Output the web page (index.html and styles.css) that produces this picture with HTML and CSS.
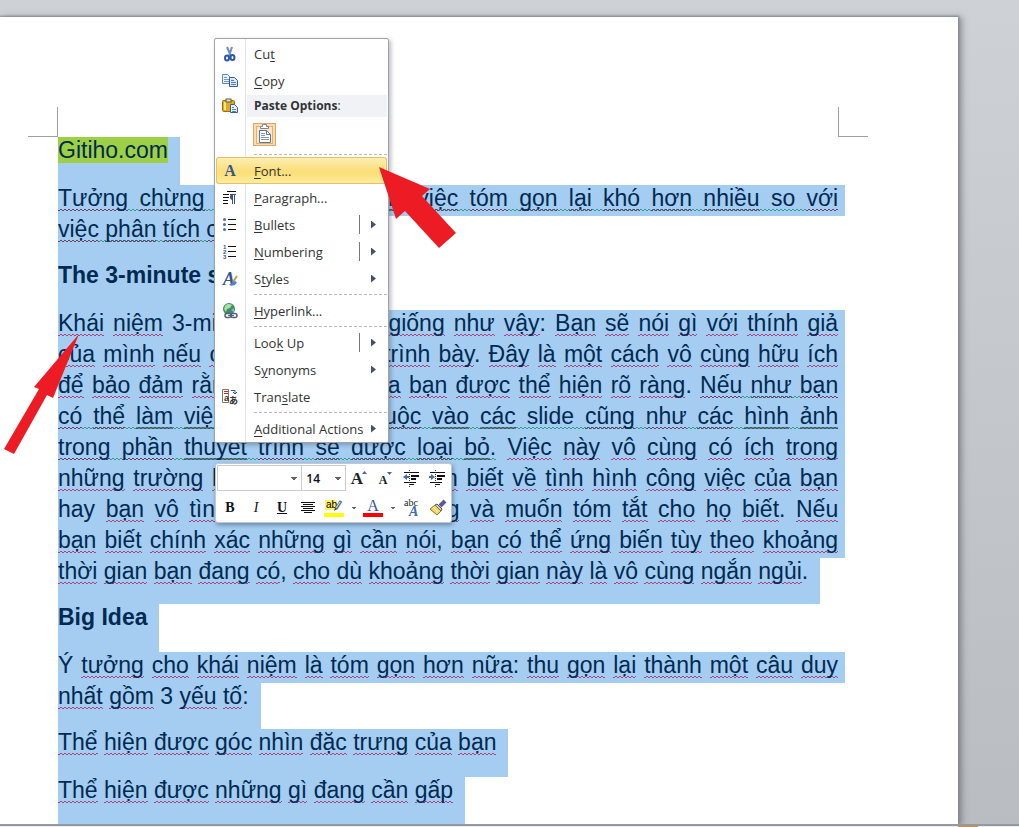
FILE: index.html
```
<!DOCTYPE html>
<html lang="vi">
<head>
    <meta charset="UTF-8">
    <meta name="viewport" content="width=device-width, initial-scale=1.0">
    <title>Gitiho.com</title>
    <link rel="stylesheet" href="styles.css">
</head>
<body>
    <main class="workspace">
        <article class="page">
            <div class="margin-marks">
                <span class="mark mark-left"></span>
                <span class="mark mark-right"></span>
            </div>

            <div class="document">
                <p><span class="line end"><mark>Gitiho.com</mark></span></p>

                <p class="justified">
                    <span class="line"><span class="grammar"><u>Tưởng</u> <u>chừng</u> <u>thuận</u> <u>tiện</u>, <u>nhưng</u> <u>việc</u> <u>tóm</u> <u>gọn</u> <u>lại</u> <u>khó</u> <u>hơn</u> <u>nhiều</u> so <u>với</u></span></span>
                    <span class="line end"><span class="grammar"><u>việc</u> <u>phân</u> <u>tích</u> <u>chi</u> <u>tiết</u></span>.</span>
                </p>

                <h2><span class="line end">The 3-minute story</span></h2>

                <p class="justified">
                    <span class="line"><u>Khái</u> <u>niệm</u> 3-minute story <u>cũng</u> <u>giống</u> <u>như</u> <u>vậy</u>: <u>Bạn</u> <u>sẽ</u> <u>nói</u> <u>gì</u> <u>với</u> <u>thính</u> <u>giả</u></span>
                    <span class="line"><u>của</u> <u>mình</u> <u>nếu</u> <u>chỉ</u> <u>được</u> 3 <u>phút</u> <u>trình</u> <u>bày</u>. <u>Đây</u> <u>là</u> <u>một</u> <u>cách</u> <u>vô</u> <u>cùng</u> <u>hữu</u> <u>ích</u></span>
                    <span class="line"><u>để</u> <u>bảo</u> <u>đảm</u> <u>rằng</u> <u>thông</u> <u>điệp</u> <u>của</u> <u>bạn</u> <u>được</u> <u>thể</u> <u>hiện</u> <u>rõ</u> <u>ràng</u>. <span class="grammar"><u>Nếu</u> <u>như</u> <u>bạn</u></span></span>
                    <span class="line"><span class="grammar"><u>có</u> <u>thể</u> <u>làm</u> <u>việc</u>, <u>không</u> <u>phụ</u> <u>thuộc</u> <u>vào</u> <u>các</u> slide <u>cũng</u> <u>như</u> <u>các</u> <u>hình</u> <u>ảnh</u></span></span>
                    <span class="line"><span class="grammar"><u>trong</u> <u>phần</u> <u>thuyết</u> <u>trình</u> <u>sẽ</u> <u>được</u> <u>loại</u> <u>bỏ</u>.</span> <u>Việc</u> <u>này</u> <u>vô</u> <u>cùng</u> <u>có</u> <u>ích</u> <u>trong</u></span>
                    <span class="line"><u>những</u> <u>trường</u> <u>hợp</u> <u>sếp</u> <u>của</u> <u>bạn</u> <u>muốn</u> <u>biết</u> <u>về</u> <u>tình</u> <u>hình</u> <u>công</u> <u>việc</u> <u>của</u> <u>bạn</u></span>
                    <span class="line">hay <u>bạn</u> <u>vô</u> <u>tình</u> <u>gặp</u> <u>một</u> <u>khách</u> <u>hàng</u> <u>và</u> <u>muốn</u> <u>tóm</u> <u>tắt</u> <u>cho</u> <u>họ</u> <u>biết</u>. <u>Nếu</u></span>
                    <span class="line"><u>bạn</u> <u>biết</u> <u>chính</u> <u>xác</u> <u>những</u> <u>gì</u> <u>cần</u> <u>nói</u>, <u>bạn</u> <u>có</u> <u>thể</u> <u>ứng</u> <u>biến</u> <u>tùy</u> <u>theo</u> <u>khoảng</u></span>
                    <span class="line end"><u>thời</u> <u>gian</u> <u>bạn</u> <u>đang</u> <u>có</u>, <u>cho</u> <u>dù</u> <u>khoảng</u> <u>thời</u> <u>gian</u> <u>này</u> <u>là</u> <u>vô</u> <u>cùng</u> <u>ngắn</u> <u>ngủi</u>.</span>
                </p>

                <h2><span class="line end">Big Idea</span></h2>

                <p class="justified">
                    <span class="line">Ý <u>tưởng</u> <u>cho</u> <u>khái</u> <u>niệm</u> <u>là</u> <u>tóm</u> <u>gọn</u> <u>hơn</u> <u>nữa</u>: <u>thu</u> <u>gọn</u> <u>lại</u> <u>thành</u> <u>một</u> <u>câu</u> <u>duy</u></span>
                    <span class="line end"><u>nhất</u> <u>gồm</u> 3 <u>yếu</u> <u>tố</u>:</span>
                </p>

                <p><span class="line end"><u>Thể</u> <u>hiện</u> <u>được</u> <u>góc</u> <u>nhìn</u> <u>đặc</u> <u>trưng</u> <u>của</u> <u>bạn</u></span></p>
                <p><span class="line end"><u>Thể</u> <u>hiện</u> <u>được</u> <u>những</u> <u>gì</u> <u>đang</u> <u>cần</u> <u>gấp</u></span></p>
            </div>
        </article>
    </main>
    <footer class="status-edge"><span class="status-tab"></span></footer>

    <div class="context-menu" role="menu">
        <button class="item" role="menuitem">
            <svg class="icon" viewBox="0 0 16 16"><path d="M5 1l4 9M10 1L7 10" fill="none" stroke="#6d8fbd" stroke-width="2"/><ellipse cx="5" cy="12" rx="2" ry="2.500" fill="none" stroke="#2b57a8" stroke-width="2"/><ellipse cx="10.500" cy="11.500" rx="2" ry="2.500" fill="none" stroke="#2b57a8" stroke-width="2"/></svg>
            <span class="label">Cu<span class="key">t</span></span>
        </button>
        <button class="item" role="menuitem">
            <svg class="icon" viewBox="0 0 16 16"><path d="M.500 1.500h5l3 3v6h-8z" fill="#eaf2fc" stroke="#5d86bd"/><path d="M2 4.500h3M2 6.500h5M2 8.500h5" stroke="#6f98cc"/><path d="M7.500 4.500h5l3 3v6h-8z" fill="#dbe9fa" stroke="#2f5f9e"/><path d="M9 7.500h3M9 9.500h5M9 11.500h5" stroke="#5380b8"/></svg>
            <span class="label"><span class="key">C</span>opy</span>
        </button>
        <div class="heading">
            <svg class="icon" viewBox="0 0 16 16"><rect x=".500" y="2.500" width="12" height="11" rx="1" fill="#e0a91e" stroke="#9c6e13"/><path d="M3 4v8" stroke="#fbe38c" stroke-width="2"/><rect x="4" y="1" width="5" height="3" fill="#e9e4d2" stroke="#66583a"/><path d="M8.500 6.500h4l3 3v5h-7z" fill="#e7f0fb" stroke="#3a5f94"/><path d="M10 9.500h2M10 11.500h4M10 13.500h4" stroke="#5380b8"/></svg>
            <span class="heading-text">Paste Options<span class="colon">:</span></span>
        </div>
        <div class="paste-row">
            <button class="paste-button" aria-label="Keep Text Only">
                <svg width="21" height="21" viewBox="0 0 21 21"><rect x="2.500" y="2.500" width="16" height="17" fill="#fbe8c8" stroke="#d9b47c"/><path d="M6.500 4.500v-2h2v-2h4v2h2v2z" fill="#fff" stroke="#7d8596"/><path d="M5.500 6.500h7l4 4v8h-11z" fill="#fff" stroke="#66758f"/><path d="M12.500 6.500v4h4" fill="none" stroke="#66758f"/><path d="M7 9.500h4M7 11.500h4M7 13.500h8M7 15.500h8" stroke="#7d97bd"/></svg>
            </button>
        </div>
        <hr>
        <button class="item active" role="menuitem">
            <svg class="icon" viewBox="0 0 16 16"><text x="8" y="13" text-anchor="middle" class="glyph bold">A</text></svg>
            <span class="label"><span class="key">F</span>ont...</span>
        </button>
        <button class="item" role="menuitem">
            <svg class="icon" viewBox="0 0 16 16"><path d="M5 1.500h9M1 4.500h6M1 7.500h6M1 10.500h5M1 13.500h5" stroke="#111"/><path d="M10.500 4v10M12.500 4v10M8 4.500h6" stroke="#394f87" fill="none"/><path d="M11 4a3 3 0 0 0 0 6z" fill="#394f87"/></svg>
            <span class="label"><span class="key">P</span>aragraph...</span>
        </button>
        <button class="item" role="menuitem">
            <svg class="icon" viewBox="0 0 16 16"><path d="M6 2.500h8M6 7.500h8M6 12.500h8" stroke="#111"/><circle cx="2.500" cy="2.500" r="1.500" fill="#4a6ea9"/><circle cx="2.500" cy="7.500" r="1.500" fill="#4a6ea9"/><circle cx="2.500" cy="12.500" r="1.500" fill="#4a6ea9"/></svg>
            <span class="label"><span class="key">B</span>ullets</span>
            <span class="split"></span><span class="arrow"></span>
        </button>
        <button class="item" role="menuitem">
            <svg class="icon" viewBox="0 0 16 16"><path d="M6 2.500h8M6 7.500h8M6 12.500h8" stroke="#111"/><text x="1" y="5" class="digit">1</text><text x="1" y="10" class="digit">2</text><text x="1" y="15" class="digit">3</text></svg>
            <span class="label"><span class="key">N</span>umbering</span>
            <span class="split"></span><span class="arrow"></span>
        </button>
        <button class="item" role="menuitem">
            <svg class="icon" viewBox="0 0 16 16"><text x="7" y="14" text-anchor="middle" class="glyph slanted">A</text><path d="M15 5l-4 6" stroke="#b9a04a" stroke-width="2"/><path d="M8 14.500c2-4 4-5 6-4s-1 5-6 4z" fill="#4d83cf"/></svg>
            <span class="label">S<span class="key">t</span>yles</span>
            <span class="arrow"></span>
        </button>
        <hr>
        <button class="item" role="menuitem">
            <svg class="icon" viewBox="0 0 16 16"><circle cx="7" cy="6" r="6" fill="#3f8d62"/><path d="M3 3c2-3 5-2 7-1l-2 3-3 1-1 3-2-3z" fill="#a9dfa4"/><path d="M9 7l3-2v4z" fill="#79bce8"/><rect x="3" y="10.500" width="6" height="4" rx="2" fill="#fff" stroke="#51607a" stroke-width="1.500"/><rect x="9" y="10.500" width="6" height="4" rx="2" fill="#fff" stroke="#51607a" stroke-width="1.500"/><path d="M6 12.500h6" stroke="#51607a"/></svg>
            <span class="label"><span class="key">H</span>yperlink...</span>
        </button>
        <hr>
        <button class="item" role="menuitem">
            <span class="icon"></span>
            <span class="label">Loo<span class="key">k</span> Up</span>
            <span class="split"></span><span class="arrow"></span>
        </button>
        <button class="item" role="menuitem">
            <span class="icon"></span>
            <span class="label">S<span class="key">y</span>nonyms</span>
            <span class="arrow"></span>
        </button>
        <button class="item" role="menuitem">
            <svg class="icon" viewBox="0 0 16 16"><path d="M.500.500h6v13h-6z" fill="#fff" stroke="#777"/><path d="M2 2.500h4M2 4.500h4" stroke="#c22"/><text x="2" y="12" class="letter">a</text><text x="7" y="15" class="letter">あ</text><path d="M9 1.500h4v3M11 3l2 2 2-2" fill="none" stroke="#345a9c"/></svg>
            <span class="label">Tran<span class="key">s</span>late</span>
        </button>
        <hr>
        <button class="item" role="menuitem">
            <span class="icon"></span>
            <span class="label"><span class="key">A</span>dditional Actions</span>
            <span class="arrow"></span>
        </button>
    </div>

    <div class="mini-toolbar" role="toolbar">
        <div class="tool-row">
            <select class="font-name" aria-label="Font"><option></option></select>
            <select class="font-size" aria-label="Font size"><option>14</option></select>
            <button class="tool" aria-label="Grow font"><svg viewBox="0 0 20 20"><text x="8" y="16" text-anchor="middle" class="tool-letter large">A</text><path d="M13 6h5l-2.500-3z" fill="#44679e"/></svg></button>
            <button class="tool" aria-label="Shrink font"><svg viewBox="0 0 20 20"><text x="8" y="16" text-anchor="middle" class="tool-letter small">A</text><path d="M12 4h5l-2.500 3z" fill="#44679e"/></svg></button>
            <button class="tool" aria-label="Decrease indent"><svg viewBox="0 0 20 20"><path d="M3 4.500h15M3 14.500h12M9 16.500h4" stroke="#111"/><path d="M10 8h8M10 11h5" stroke="#111" stroke-width="2"/><path d="M8.500 2v17" stroke="#333" stroke-dasharray="1 1"/><path d="M2 9l4-3v2h2v2H6v2z" fill="#456cac"/></svg></button>
            <button class="tool" aria-label="Increase indent"><svg viewBox="0 0 20 20"><path d="M3 4.500h15M3 14.500h12M9 16.500h4" stroke="#111"/><path d="M10 8h8M10 11h5" stroke="#111" stroke-width="2"/><path d="M8.500 2v17" stroke="#333" stroke-dasharray="1 1"/><path d="M8 9L4 6v2H2v2h2v2z" fill="#456cac"/></svg></button>
        </div>
        <div class="tool-row">
            <button class="tool text-tool bold">B</button>
            <button class="tool text-tool italic">I</button>
            <button class="tool text-tool underlined">U</button>
            <button class="tool" aria-label="Center"><svg viewBox="0 0 20 20"><path d="M3 4.500h14M5 6.500h10M3 8.500h14M5 10.500h10M3 12.500h14M6 14.500h8" stroke="#111"/></svg></button>
            <button class="tool" aria-label="Highlight color"><svg viewBox="0 0 20 20"><rect x="1" y="2" width="12" height="10" fill="#fff36a"/><text x="2" y="10" class="ab">ab</text><path d="M17 3l-5 8" stroke="#55789f" stroke-width="3"/><path d="M16 4l-4 6" stroke="#d5e4f5"/><path d="M10 13l1-3 2 1z" fill="#333"/><rect y="15" width="20" height="4" fill="#ff0"/></svg></button>
            <button class="drop" aria-label="Highlight options"></button>
            <button class="tool" aria-label="Font color"><svg viewBox="0 0 20 20"><text x="10" y="13" text-anchor="middle" class="glyph">A</text><rect y="15" width="20" height="4" fill="#f00"/></svg></button>
            <button class="drop" aria-label="Font color options"></button>
            <button class="tool" aria-label="Styles"><svg viewBox="0 0 20 20"><text x="2" y="8" class="abc">abc</text><text x="7" y="18" class="style-letter">A</text></svg></button>
            <button class="tool" aria-label="Format painter"><svg viewBox="0 0 20 20"><path d="M17 3l-5 5" stroke="#5b5b8f" stroke-width="4"/><path d="M9 6l5 5-1 2-6-6z" fill="#c9ccd6" stroke="#555" stroke-width="1"/><path d="M7 7l6 6-4 4-7-6z" fill="#f3d867" stroke="#8f7420"/><path d="M5 9l5 5" stroke="#fff6bd"/></svg></button>
        </div>
    </div>

    <svg class="pointer pointer-menu" viewBox="0 0 77 82"><path d="M0 0l51 22-8 7 34 37-17 15-34-37-9 8z"/></svg>
    <svg class="pointer pointer-text" viewBox="0 0 76 120"><path d="M75 0L49 64l-6-3-33 59-10-5 35-60-5-2z"/></svg>
</body>
</html>
```

FILE: styles.css
```
* {
    box-sizing: border-box;
}

body {
    margin: 0;
    height: 100vh;
    display: flex;
    flex-direction: column;
    overflow: hidden;
    background: linear-gradient(#ced2d7, #b9bcc1);
    font-family: "Open Sans", sans-serif;
}

button {
    font-family: inherit;
    border: none;
    padding: 0;
    background: none;
    color: inherit;
}

.workspace {
    flex: 1;
    min-height: 0;
    overflow: hidden;
    padding: 17px 61px 0 0;
}

.page {
    min-height: 100%;
    padding-top: 90px;
    background-color: #fff;
    box-shadow: 0 0 2px 1px #85888e, 4px 0 6px rgba(80, 84, 92, 0.5);
}

.margin-marks {
    display: flex;
    justify-content: space-between;
    padding: 0 90px 0 28px;
}

.mark {
    width: 30px;
    height: 30px;
    border-bottom: 1px solid #a0a0a0;
}

.mark-left {
    border-right: 1px solid #a0a0a0;
}

.mark-right {
    border-left: 1px solid #a0a0a0;
}

/* selected text */
.document {
    padding: 0 113px 0 58px;
    font-family: "Liberation Sans", Arial, sans-serif;
    font-size: 23px;
    line-height: 27px;
    color: #002a52;
}

.document p,
.document h2 {
    margin: 0;
    font-size: inherit;
}

.line {
    display: block;
    padding: 0 7px 4px 0;
    white-space: nowrap;
    text-align-last: justify;
    background-color: #a4cdf1;
}

.line.end {
    width: fit-content;
    padding-right: 12px;
    padding-bottom: 21px;
    text-align-last: left;
}

.justified .line.end {
    padding-bottom: 19px;
}

mark {
    background-color: #9ed045;
    color: inherit;
}

/* zigzag under misspelled words (red) and sentences (green) */
.line u,
.grammar {
    --wave: #a8457f;
    text-decoration: none;
    background-image: linear-gradient(90deg, var(--wave) 2px, transparent 2px), linear-gradient(90deg, var(--wave) 2px, transparent 2px);
    background-size: 4px 1px;
    background-position: 0 100%, 2px calc(100% - 1px);
    background-repeat: repeat-x;
}

.grammar {
    --wave: #2f9e8a;
}

.grammar u {
    --wave: #6b3f66;
}

.status-edge {
    height: 3px;
    padding-left: 958px;
    border-top: 2px solid #96989d;
    background-color: #e9edf3;
}

.status-tab {
    display: block;
    width: 20px;
    height: 1px;
    background-color: #c98f3a;
}

/* right click menu */
.context-menu {
    position: absolute;
    left: 214px;
    top: 38px;
    width: 175px;
    padding: 1px 1px 0 1px;
    border: 1px solid #a0a3a8;
    border-radius: 2px;
    background: linear-gradient(90deg, #fff 30px, #e2e4e7 30px, #e2e4e7 31px, #fff 31px);
    box-shadow: 2px 2px 4px rgba(60, 60, 90, 0.35);
    color: #333;
    font-size: 13px;
}

.item {
    display: flex;
    align-items: center;
    width: 100%;
    height: 27px;
    padding: 0 11px 0 6px;
    font-size: 13px;
    text-align: left;
}

.item.active {
    border-radius: 3px;
    background: linear-gradient(#fdf0b8, #fbdf7c 50%, #fbe079 60%, #fdeea2);
    box-shadow: inset 0 0 0 1px #e5c365;
}

.icon {
    width: 16px;
    height: 16px;
    flex: none;
}

.label {
    flex: 1;
    padding-left: 16px;
    white-space: nowrap;
}

.key {
    text-decoration: underline;
    text-underline-offset: 2px;
}

.heading {
    display: flex;
    align-items: center;
    height: 24px;
    padding-left: 6px;
}

.heading-text {
    flex: 1;
    margin-left: 9px;
    padding-left: 7px;
    line-height: 22px;
    background-color: #f0f2f5;
    font-size: 12px;
    font-weight: bold;
}

.colon {
    font-weight: normal;
}

.paste-row {
    height: 34px;
    padding: 5px 0 0 37px;
}

.paste-button {
    display: block;
    width: 23px;
    height: 23px;
    border: 1px solid #dfa86a;
    background-color: #fbdcae;
}

.context-menu hr {
    height: 1px;
    margin: 2px 0 2px 38px;
    border: none;
    background: repeating-linear-gradient(90deg, #b8babf 0, #b8babf 3px, #fff 3px, #fff 5px);
}

.split {
    width: 1px;
    height: 19px;
    margin-right: 11px;
    background-color: #777;
}

.arrow {
    width: 5px;
    height: 8px;
    background-color: #44506f;
    clip-path: polygon(0 0, 100% 50%, 0 100%);
}

.glyph {
    font: 16px "Liberation Serif", serif;
    fill: #35558f;
}

.glyph.bold {
    font-weight: bold;
}

.glyph.slanted {
    font-style: italic;
    font-weight: bold;
    font-size: 18px;
}

.digit {
    font: bold 6px "Liberation Sans", sans-serif;
    fill: #35558f;
}

.letter {
    font: bold 9px "Liberation Sans", "Noto Sans CJK JP", sans-serif;
    fill: #333;
}

/* floating format bar */
.mini-toolbar {
    position: absolute;
    left: 215px;
    top: 463px;
    display: flex;
    flex-direction: column;
    gap: 4px;
    width: 237px;
    padding: 1px;
    border: 1px solid #c3c8d0;
    border-radius: 3px;
    background-color: #fff;
    box-shadow: 1px 2px 4px rgba(40, 50, 80, 0.45);
}

.tool-row {
    display: flex;
    align-items: center;
    height: 26px;
}

.tool-row select {
    appearance: none;
    height: 26px;
    border: 1px solid #c9ccd1;
    border-radius: 0;
    padding: 0 4px;
    background: conic-gradient(from -45deg at 50% 100%, #666 90deg, transparent 0) right 4px center / 6px 3px no-repeat #fff;
    font-family: "Open Sans", sans-serif;
    font-size: 12px;
    font-weight: 600;
    color: #111;
}

.tool-row .font-name {
    width: 86px;
}

.tool-row .font-size {
    width: 44px;
    border-left: none;
}

.tool {
    width: 26px;
    height: 26px;
    display: flex;
    align-items: center;
    justify-content: center;
    flex: none;
}

.tool svg {
    width: 20px;
    height: 20px;
}

.text-tool {
    font-family: "Liberation Serif", serif;
    font-size: 14px;
    color: #111;
}

.text-tool.bold {
    font-weight: bold;
}

.text-tool.italic {
    font-style: italic;
}

.text-tool.underlined {
    font-weight: bold;
    text-decoration: underline;
}

.drop {
    width: 13px;
    height: 26px;
    flex: none;
    background: conic-gradient(from -45deg at 50% 100%, #666 90deg, transparent 0) center / 6px 3px no-repeat;
}

.tool-letter {
    font-family: "Liberation Serif", serif;
    font-weight: bold;
    fill: #222;
}

.tool-letter.large {
    font-size: 17px;
}

.tool-letter.small {
    font-size: 12px;
}

.ab {
    font: 10px "Liberation Sans", sans-serif;
}

.abc {
    font: 10px "Liberation Serif", serif;
    fill: #222;
}

.style-letter {
    font: italic bold 14px "Liberation Serif", serif;
    fill: #3f6bb5;
}

/* red pointers */
.pointer {
    position: absolute;
    fill: #ed1c24;
}

.pointer-menu {
    left: 379px;
    top: 167px;
    width: 77px;
}

.pointer-text {
    left: 4px;
    top: 334px;
    width: 76px;
}
```
